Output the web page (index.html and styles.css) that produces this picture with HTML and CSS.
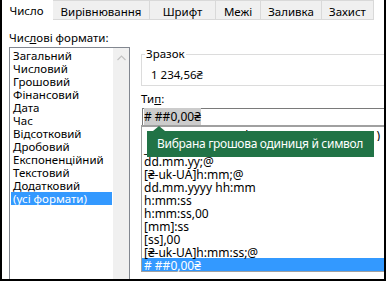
FILE: index.html
```html
<!DOCTYPE html>
<html>
<head>
<meta charset="utf-8">
<link rel="stylesheet" href="styles.css">
</head>
<body>
<div class="dialog">
  <div class="tabs">
    <div class="tab active">Число</div>
    <div class="tab t2">Вирівнювання</div>
    <div class="tab t3">Шрифт</div>
    <div class="tab t4">Межі</div>
    <div class="tab t5">Заливка</div>
    <div class="tab t6">Захист</div>
    <div class="tab-rest"></div>
  </div>
  <div class="body">
    <div class="left">
      <div class="label">Чис<u>л</u>ові формати:</div>
      <div class="catlist">
        <div class="items">
          <div class="item">Загальний</div>
          <div class="item">Числовий</div>
          <div class="item">Грошовий</div>
          <div class="item">Фінансовий</div>
          <div class="item">Дата</div>
          <div class="item">Час</div>
          <div class="item">Відсотковий</div>
          <div class="item">Дробовий</div>
          <div class="item">Експоненційний</div>
          <div class="item">Текстовий</div>
          <div class="item">Додатковий</div>
          <div class="item selected">(усі формати)</div>
        </div>
        <div class="scroll">
          <svg class="chev" width="9" height="6" viewBox="0 0 9 6"><path d="M0.5 5 L4.5 1 L8.5 5" fill="none" stroke="#c2c2c2" stroke-width="1.2"/></svg>
        </div>
      </div>
    </div>
    <div class="right">
      <div class="sample">
        <span class="legend">Зразок</span>
        <div class="sample-value">1 234,56₴</div>
      </div>
      <div class="label type-label">Ти<u>п</u>:</div>
      <div class="input"><span class="sel"># ##0,00₴</span></div>
      <div class="fmtlist">
        <div class="row row-split"><span>_(* # ##0,00 ₴_);_(* (# ##0,00 ₴</span><span>)</span></div>
        <div class="row">_-* # ##0,00 ₴_-;-* # ##0,00 ₴_-</div>
        <div class="row">dd.mm.yy;@</div>
        <div class="row">[₴-uk-UA]h:mm;@</div>
        <div class="row">dd.mm.yyyy hh:mm</div>
        <div class="row">h:mm:ss</div>
        <div class="row">h:mm:ss,00</div>
        <div class="row">[mm]:ss</div>
        <div class="row">[ss],00</div>
        <div class="row">[₴-uk-UA]h:mm:ss;@</div>
        <div class="row selected"># ##0,00₴</div>
      </div>
      <div class="tooltip">Вибрана грошова одиниця й символ</div>
    </div>
  </div>
</div>
</body>
</html>
```

FILE: styles.css
```css
* { box-sizing: border-box; }
html, body { margin: 0; padding: 0; background: #fff; }
body {
  font-family: "Noto Sans", "Open Sans", sans-serif;
  font-size: 11.5px;
  color: #000;
}
.dialog {
  width: 386px;
  height: 281px;
  border: 2px solid #000;
  border-top: 0;
  overflow: hidden;
  position: relative;
  background: #fff;
}
.tabs {
  display: flex;
  height: 20px;
  margin-left: -2px;
}
.tab {
  height: 20px;
  line-height: 21px;
  text-align: center;
  background: #f0f0f0;
  border: 1px solid #d9d9d9;
  border-left: 0;
  white-space: nowrap;
}
.tab.active { background: #fff; width: 53px; border: 0; }
.t2 { width: 97px; }
.t3 { width: 66px; }
.t4 { width: 45px; }
.t5 { width: 61px; }
.t6 { width: 52px; }
.tab-rest { flex: 1; }
.body {
  display: flex;
  padding-top: 10px;
}
.left {
  width: 130px;
  padding-left: 7px;
  flex: none;
}
.label {
  height: 17px;
  line-height: 16px;
  white-space: nowrap;
}
.catlist {
  display: flex;
  border: 1px solid #828790;
  border-bottom: 0;
  height: 240px;
  width: 121px;
}
.items {
  flex: 1;
  padding: 1px 1px 0 1px;
}
.item {
  height: 13px;
  line-height: 13px;
  padding-left: 2px;
  white-space: nowrap;
}
.item.selected { background: #3399ff; color: #fff; }
.scroll {
  width: 16px;
  background: #f0f0f0;
  display: flex;
  justify-content: center;
  padding-top: 7px;
}
.chev { display: block; }
.right {
  flex: none;
  width: 260px;
  margin-left: 9px;
  padding-top: 17px;
  position: relative;
}
.sample {
  position: relative;
  margin-top: 7px;
  border: 1px solid #dcdcdc;
  height: 32px;
  padding-top: 12px;
}
.legend {
  position: absolute;
  left: 3px;
  top: -8px;
  padding: 0 1px;
  line-height: 14px;
  background: #fff;
}
.sample-value {
  padding-left: 9px;
  line-height: 16px;
}
.type-label {
  margin-top: 5px;
  height: 17px;
  line-height: 16px;
}
.input {
  height: 17px;
  border: 1px solid #7a7a7a;
  border-bottom: 0;
  margin-left: 1px;
  padding-left: 1px;
  line-height: 15px;
  font-size: 12px;
}
.sel { background: #cccccc; }
.fmtlist {
  border: 1px solid #a0a0a0;
  border-top: 2px solid #a0a0a0;
  padding: 1px 0 0 0;
  height: 147px;
  width: 250px;
  font-size: 12px;
}
.row {
  height: 13px;
  line-height: 15px;
  padding-left: 2px;
  white-space: nowrap;
}
.row-split {
  display: flex;
  justify-content: space-between;
  padding-right: 10px;
  overflow: hidden;
}
.row.selected { background: #3399ff; color: #fff; }
.tooltip {
  position: absolute;
  left: 6px;
  top: 101px;
  width: 227px;
  height: 26px;
  background: #217346;
  color: #fff;
  font-size: 12px;
  letter-spacing: -0.3px;
  line-height: 26px;
  padding-left: 10px;
  white-space: nowrap;
}
.tooltip::before {
  content: "";
  position: absolute;
  left: 6px;
  top: -5px;
  border-left: 6px solid transparent;
  border-right: 6px solid transparent;
  border-bottom: 5px solid #217346;
}
```
